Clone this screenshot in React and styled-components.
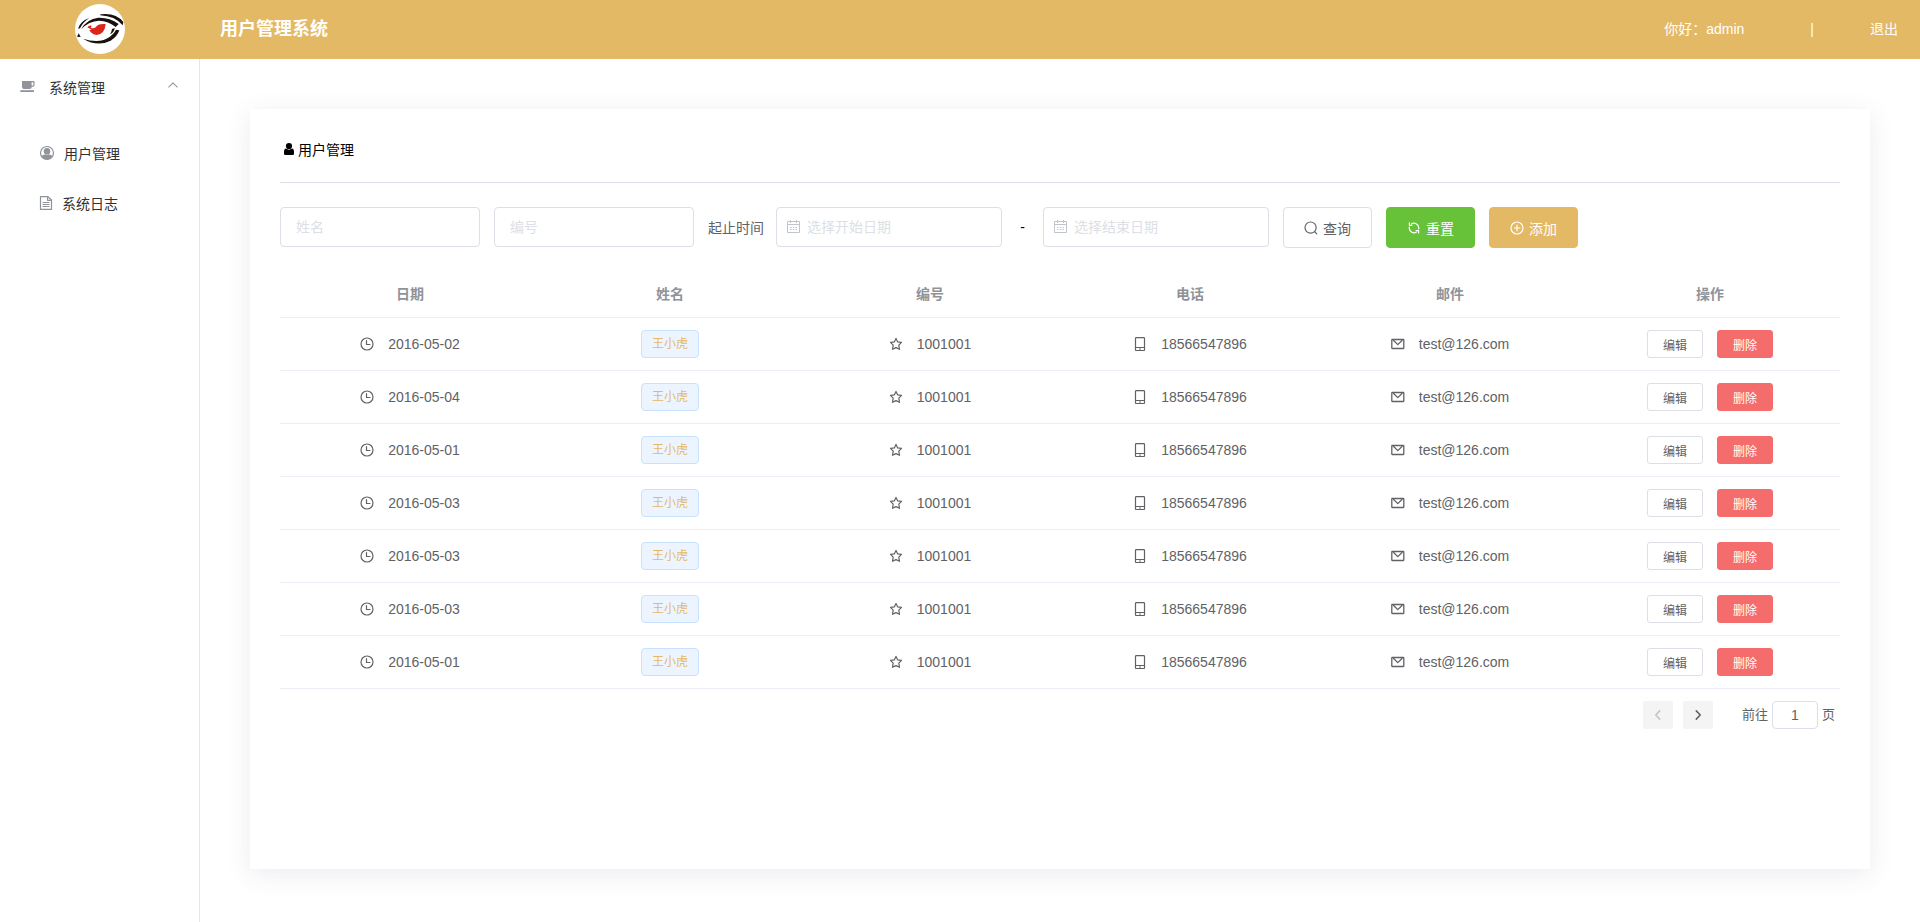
import React, { useState } from "react";
import styled, { createGlobalStyle, css } from "styled-components";

const gold = "#e3b965";
const sans = `"Liberation Sans", "Noto Sans CJK SC", sans-serif`;

const GlobalStyle = createGlobalStyle`
  *, *::before, *::after { box-sizing: border-box; }
  body { margin: 0; background: #fff; font-family: ${sans}; font-size: 14px; color: #303133; }
  button, input { font-family: inherit; }
`;

const Page = styled.div`
  min-height: 100vh;
  display: flex;
  flex-direction: column;
`;

const Header = styled.header`
  display: flex;
  align-items: center;
  height: 59px;
  padding-bottom: 2px;
  background: ${gold};
  color: #fff;
`;

const LogoBox = styled.div`
  width: 200px;
  display: flex;
  justify-content: center;
`;

const AppTitle = styled.h1`
  flex: 1;
  margin: 0;
  padding-left: 20px;
  font-size: 18px;
  line-height: 24px;
`;

const UserBar = styled.div`
  display: flex;
  align-items: center;
  padding-right: 22px;
  line-height: 20px;
`;

const Divider = styled.span`
  padding: 0 56px 0 66px;
`;

const LogoutLink = styled.a`
  color: inherit;
  text-decoration: none;
`;

const Body = styled.div`
  flex: 1;
  display: flex;
`;

const Sidebar = styled.nav`
  width: 200px;
  flex: none;
  border-right: 1px solid #e6e6e6;
`;

const MenuGroup = styled.button`
  display: flex;
  align-items: center;
  width: 100%;
  height: 56px;
  padding: 0 20px;
  border: 0;
  background: none;
  font-size: 14px;
  color: #303133;
  text-align: left;
  svg { color: #909399; }
`;

const GroupLabel = styled.span`
  flex: 1;
  padding-left: 14px;
`;

const GroupArrow = styled.span`
  display: flex;
  padding-bottom: 4px;
`;

const MenuList = styled.ul`
  list-style: none;
  margin: 0;
  padding: 13px 0 0;
`;

const MenuLink = styled.a`
  display: flex;
  align-items: center;
  gap: 9px;
  height: 50px;
  padding-left: 39px;
  color: #303133;
  text-decoration: none;
  svg { color: #909399; }
`;

const Main = styled.main`
  flex: 1;
  min-width: 0;
  display: flex;
  padding: 50px 50px 53px;
`;

const Card = styled.section`
  flex: 1;
  min-width: 0;
  padding: 30px;
  background: #fff;
  box-shadow: 0 5px 24px rgba(60, 70, 110, 0.1);
`;

const CardTitle = styled.h2`
  display: flex;
  align-items: center;
  gap: 3px;
  height: 44px;
  margin: 0;
  padding: 0 3px 24px;
  border-bottom: 1px solid #dcdfe6;
  font-size: 14px;
  font-weight: 400;
  color: #000;
`;

const Filters = styled.form`
  display: flex;
  flex-wrap: wrap;
  gap: 14px;
  padding: 24px 0 22px;
`;

const field = css`
  height: 40px;
  border: 1px solid #dcdfe6;
  border-radius: 4px;
  background: #fff;
  font-size: 14px;
  color: #606266;
  outline: none;
  &::placeholder { color: #dcdfe6; opacity: 1; }
  &:focus { border-color: ${gold}; }
`;

const TextField = styled.input`
  ${field}
  width: 200px;
  padding: 0 15px;
`;

const DateRange = styled.div`
  display: flex;
  height: 40px;
  align-items: center;
`;

const RangeLabel = styled.label`
  padding-right: 12px;
  color: #606266;
`;

const DateBox = styled.div`
  position: relative;
  width: 226px;
  color: #c0c4cc;
  svg { position: absolute; left: 11px; top: 13px; }
`;

const DateField = styled.input`
  ${field}
  width: 100%;
  padding: 0 30px;
`;

const Dash = styled.span`
  width: 41px;
  text-align: center;
  color: #000;
`;

const tones = {
  plain: css`background: #fff; border-color: #dcdfe6; color: #606266;`,
  success: css`background: #67c23a; border-color: #67c23a; color: #fff;`,
  primary: css`background: ${gold}; border-color: ${gold}; color: #fff;`,
  danger: css`background: #f56c6c; border-color: #f56c6c; color: #fff;`,
};

const Button = styled.button`
  display: inline-flex;
  align-items: center;
  justify-content: center;
  gap: 5px;
  height: ${(p) => (p.$small ? 28 : 41)}px;
  padding: 0 ${(p) => (p.$small ? 15 : 20)}px;
  border: 1px solid;
  border-radius: ${(p) => (p.$small ? 3 : 4)}px;
  font-size: ${(p) => (p.$small ? 12 : 14)}px;
  white-space: nowrap;
  cursor: pointer;
  ${(p) => tones[p.$tone]}
`;

const Table = styled.table`
  width: 100%;
  table-layout: fixed;
  border-collapse: separate;
  border-spacing: 0;
  color: #606266;
`;

const Th = styled.th`
  height: 48px;
  padding: 0 0 2px;
  border-bottom: 1px solid #ebeef5;
  color: #909399;
  font-weight: 700;
`;

const Td = styled.td`
  height: 53px;
  padding: 0;
  border-bottom: 1px solid #ebeef5;
`;

const Cell = styled.div`
  display: flex;
  align-items: center;
  justify-content: center;
  gap: 14px;
  height: 28px;
`;

const Tag = styled.span`
  height: 28px;
  padding: 0 10px;
  border: 1px solid #c6e2ff;
  border-radius: 4px;
  background: #ecf5ff;
  color: ${gold};
  font-size: 12px;
  line-height: 26px;
`;

const Pagination = styled.div`
  display: flex;
  justify-content: flex-end;
  padding: 12px 5px 0 0;
  font-size: 13px;
  color: #606266;
`;

const PageButton = styled.button`
  display: flex;
  align-items: center;
  justify-content: center;
  width: 30px;
  height: 28px;
  margin-right: 10px;
  padding: 0;
  border: 0;
  border-radius: 2px;
  background: #f4f4f5;
  color: #606266;
  &:disabled { color: #c0c4cc; }
`;

const Jump = styled.label`
  display: flex;
  align-items: center;
  gap: 4px;
  padding-left: 19px;
  line-height: 28px;
`;

const JumpInput = styled.input`
  ${field}
  width: 46px;
  height: 28px;
  padding: 0 3px;
  text-align: center;
`;

const Icon = ({ children, size = 14, width = 1 }) => (
  <svg width={size} height={size} viewBox="0 0 14 14" fill="none" stroke="currentColor"
    strokeWidth={width} strokeLinecap="round" strokeLinejoin="round" aria-hidden="true">
    {children}
  </svg>
);

const ClockIcon = () => (
  <Icon width={1.2}><circle cx="7" cy="7" r="6" /><path d="M6.5 3.5V7.5H10" /></Icon>
);
const StarIcon = () => (
  <Icon width={1.2}><path d="M7 1.4 8.7 4.9 12.5 5.4 9.8 8.2 10.5 12.3 7 10.6 3.5 12.3 4.2 8.2 1.5 5.4 5.3 4.9Z" /></Icon>
);
const PhoneIcon = () => (
  <Icon width={1.2}><rect x="2.500" y="0.600" width="9" height="12.900" rx="0.800" /><path d="M2.500 10.500H11.500M6.500 12H7.500" /></Icon>
);
const MailIcon = () => (
  <Icon width={1.3}><rect x="0.800" y="2.500" width="12" height="9" rx="0.400" /><path d="M2.600 3.500 6.800 7.600 11 3.500" /></Icon>
);
const CalendarIcon = () => (
  <svg width="13" height="14" viewBox="0 0 13 14" fill="none" stroke="currentColor" aria-hidden="true">
    <path d="M0.500 1.500H12.500V12.500H0.500ZM0.500 4.500H12.500M3.500 0V3M9.500 0V3M3 7.500H4.500M5.800 7.500H7.300M8.500 7.500H10M3 9.500H4.500M5.800 9.500H7.300M8.500 9.500H10" />
  </svg>
);
const SearchIcon = () => (
  <Icon width={1.2}><circle cx="6.600" cy="6.600" r="5.600" /><path d="M10.900 10.900 12.800 12.800" /></Icon>
);
const RefreshIcon = () => (
  <Icon width={1.2}>
    <path d="M4.500 2.900A4.700 4.700 0 0 1 11.700 6.600V8M9.500 11.100A4.700 4.700 0 0 1 2.300 7.400V6" />
    <path d="M2.400 1.900V4.300H4.900M11.600 12.100V9.700H9.100" />
  </Icon>
);
const PlusIcon = () => (
  <Icon width={1.2}><circle cx="7" cy="7" r="6" /><path d="M4.200 7H9.800M7 4.200V9.800" /></Icon>
);
const LeftIcon = () => (
  <Icon size={12} width={1.8}><path d="M9 2.2 4.4 7 9 11.8" /></Icon>
);
const RightIcon = () => (
  <Icon size={12} width={1.8}><path d="M5 2.2 9.6 7 5 11.8" /></Icon>
);
const ChevronUp = () => (
  <Icon size={12} width={1.2}><path d="M2 9.400 7 4.600 12 9.400" /></Icon>
);
const CupIcon = () => (
  <svg width="15" height="14" viewBox="0 0 15 14" fill="currentColor" aria-hidden="true">
    <path fillRule="evenodd" d="M2 1H13.200a1.400 1.400 0 0 1 1.400 1.400V4.800A1.900 1.900 0 0 1 12.700 6.700H11.800A2.400 2.400 0 0 1 9.400 9H4A2 2 0 0 1 2 7ZM11.600 2.300V5.400H12.500A0.900 0.900 0 0 0 13.400 4.500V3A0.700 0.700 0 0 0 12.700 2.300Z" />
    <path d="M0.300 10.200H14V12H0.300Z" />
  </svg>
);
const AvatarIcon = () => (
  <svg width="16" height="16" viewBox="0 0 16 16" aria-hidden="true">
    <circle cx="8" cy="8" r="6.500" fill="none" stroke="currentColor" strokeWidth="1.200" />
    <circle cx="8" cy="6.200" r="3.200" fill="currentColor" />
    <path d="M2.400 11.200Q4 9.600 6.200 9.200Q8 10.400 9.800 9.200Q12 9.600 13.600 11.200Q11.500 14.500 8 14.500T2.400 11.200Z" fill="currentColor" />
  </svg>
);
const DocumentIcon = () => (
  <Icon width={1.2}><path d="M1.500 0.600H9L12.500 4V13.400H1.500ZM8.600 0.700V4.400H12.300M4 6.500H10M4 8.500H10M4 10.500H10" /></Icon>
);
const UserIcon = () => (
  <svg width="12" height="14" viewBox="0 0 12 14" fill="currentColor" aria-hidden="true">
    <circle cx="6" cy="4" r="3.100" />
    <path d="M1 10Q1 6.800 3 6.500Q6 8.800 9 6.500Q11 6.800 11 10V11.800Q11 13 9.800 13H2.200Q1 13 1 11.800Z" />
  </svg>
);

const Logo = () => (
  <svg width="50" height="50" viewBox="0 0 150 150" role="img" aria-label="logo">
    <circle cx="75" cy="75" r="75" fill="#fff" />
    <g fill="#17120f">
      <path d="M9 74Q16 51 43 42Q24 54 15 73Z" />
      <path d="M18 76Q35 45 70 41Q104 40 131 60L122 69Q101 51 72 50Q42 51 18 76Z" />
      <path d="M76 31Q122 25 145 54L143 64Q120 36 76 34Z" />
      <path d="M24 104Q75 120 105 98Q119 87 123 77L133 79Q127 98 107 110Q67 130 24 104Z" />
      <path d="M105 91Q110 83 111 75L119 72Q118 85 105 91ZM6 98 11 88 17 99Z" />
    </g>
    <path d="M37 70Q44 62 50 66L47 71Q55 75 62 70Q68 58 92 60Q89 91 65 93Q50 91 43 78L50 77Z" fill="#dc251b" />
  </svg>
);

const dates = ["2016-05-02", "2016-05-04", "2016-05-01", "2016-05-03", "2016-05-03", "2016-05-03", "2016-05-01"];
const rows = dates.map((date, id) => ({
  id, date, name: "王小虎", code: "1001001", phone: "18566547896", email: "test@126.com",
}));
const columns = ["日期", "姓名", "编号", "电话", "邮件", "操作"];

export default function App() {
  const [open, setOpen] = useState(true);
  return (
    <>
      <GlobalStyle />
      <Page>
        <Header>
          <LogoBox><Logo /></LogoBox>
          <AppTitle>用户管理系统</AppTitle>
          <UserBar>
            <span>你好：admin</span>
            <Divider>|</Divider>
            <LogoutLink href="#logout">退出</LogoutLink>
          </UserBar>
        </Header>
        <Body>
          <Sidebar>
            <MenuGroup type="button" aria-expanded={open} onClick={() => setOpen(!open)}>
              <CupIcon />
              <GroupLabel>系统管理</GroupLabel>
              <GroupArrow><ChevronUp /></GroupArrow>
            </MenuGroup>
            {open && (
              <MenuList>
                <li><MenuLink href="#users"><AvatarIcon />用户管理</MenuLink></li>
                <li><MenuLink href="#logs"><DocumentIcon />系统日志</MenuLink></li>
              </MenuList>
            )}
          </Sidebar>
          <Main>
            <Card>
              <CardTitle><UserIcon />用户管理</CardTitle>
              <Filters onSubmit={(e) => e.preventDefault()}>
                <TextField placeholder="姓名" aria-label="姓名" />
                <TextField placeholder="编号" aria-label="编号" />
                <DateRange>
                  <RangeLabel htmlFor="start">起止时间</RangeLabel>
                  <DateBox><DateField id="start" placeholder="选择开始日期" /><CalendarIcon /></DateBox>
                  <Dash>-</Dash>
                  <DateBox><DateField placeholder="选择结束日期" aria-label="结束日期" /><CalendarIcon /></DateBox>
                </DateRange>
                <Button type="submit" $tone="plain"><SearchIcon />查询</Button>
                <Button type="reset" $tone="success"><RefreshIcon />重置</Button>
                <Button type="button" $tone="primary"><PlusIcon />添加</Button>
              </Filters>
              <Table>
                <thead>
                  <tr>{columns.map((c) => <Th key={c} scope="col">{c}</Th>)}</tr>
                </thead>
                <tbody>
                  {rows.map((r) => (
                    <tr key={r.id}>
                      <Td><Cell><ClockIcon />{r.date}</Cell></Td>
                      <Td><Cell><Tag>{r.name}</Tag></Cell></Td>
                      <Td><Cell><StarIcon />{r.code}</Cell></Td>
                      <Td><Cell><PhoneIcon />{r.phone}</Cell></Td>
                      <Td><Cell><MailIcon />{r.email}</Cell></Td>
                      <Td>
                        <Cell>
                          <Button type="button" $small $tone="plain">编辑</Button>
                          <Button type="button" $small $tone="danger">删除</Button>
                        </Cell>
                      </Td>
                    </tr>
                  ))}
                </tbody>
              </Table>
              <Pagination>
                <PageButton type="button" disabled aria-label="上一页"><LeftIcon /></PageButton>
                <PageButton type="button" aria-label="下一页"><RightIcon /></PageButton>
                <Jump>前往<JumpInput defaultValue="1" />页</Jump>
              </Pagination>
            </Card>
          </Main>
        </Body>
      </Page>
    </>
  );
}
